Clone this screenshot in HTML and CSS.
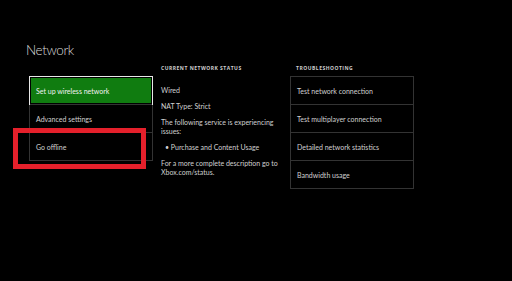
FILE: index.html
```html
<!DOCTYPE html>
<html lang="en">
<head>
    <meta charset="UTF-8">
    <title>Network</title>
    <link rel="stylesheet" href="styles.css">
</head>
<body>
    <div class="screen">
        <h1 class="title">Network</h1>

        <div class="columns">
            <div class="menu-col">
                <div class="menu">
                    <div class="menu-item selected">Set up wireless network</div>
                    <div class="menu-item">Advanced settings</div>
                    <div class="menu-item">Go offline</div>
                </div>
                <div class="highlight"></div>
            </div>

            <div class="status-col">
                <div class="col-header">Current network status</div>
                <p class="status-line wired">Wired</p>
                <p class="status-line">NAT Type: Strict</p>
                <p class="status-line">The following service is experiencing issues:</p>
                <p class="status-line bullet">&bull; Purchase and Content Usage</p>
                <p class="status-line">For a more complete description go to Xbox.com/status.</p>
            </div>

            <div class="trouble-col">
                <div class="col-header">Troubleshooting</div>
                <div class="menu">
                    <div class="menu-item">Test network connection</div>
                    <div class="menu-item">Test multiplayer connection</div>
                    <div class="menu-item">Detailed network statistics</div>
                    <div class="menu-item">Bandwidth usage</div>
                </div>
            </div>
        </div>
    </div>
</body>
</html>
```

FILE: styles.css
```css
body {
    margin: 0;
    background: #000;
    font-family: Lato, "Open Sans", sans-serif;
    color: #d8d8d8;
    width: 512px;
    height: 281px;
    overflow: hidden;
}

.screen {
    padding: 40px 0 0 26px;
}

.title {
    margin: 0;
    font-size: 13.5px;
    line-height: 20px;
    font-weight: 300;
    letter-spacing: -0.4px;
    color: #dcdcdc;
}

.columns {
    display: flex;
    margin-top: 3px;
    margin-left: 1px;
}

.menu-col {
    position: relative;
    width: 124px;
    margin-left: 2px;
    padding-top: 13px;
}

.menu {
    border: 1px solid #333;
}

.menu-item {
    height: 27px;
    display: flex;
    align-items: center;
    padding-left: 6px;
    font-size: 7px;
    color: #d0d0d0;
    border-top: 1px solid #333;
}

.menu-item:first-child {
    border-top: none;
}

.menu-item.selected {
    background: #107c10;
    color: #f2f2f2;
    border: 1px solid #e8e8e8;
    margin: -1px;
    box-shadow: inset 0 0 0 1px #000;
}

.highlight {
    position: absolute;
    left: -16px;
    top: 65px;
    width: 123px;
    height: 31px;
    border: 5px solid #e5202b;
}

.status-col {
    width: 124px;
    margin-left: 8px;
}

.col-header {
    height: 13px;
    font-family: "Open Sans", sans-serif;
    font-size: 5px;
    font-weight: 700;
    letter-spacing: 0.5px;
    text-transform: uppercase;
    color: #cfcfcf;
    line-height: 10px;
}

.status-line {
    margin: 0 0 7px;
    font-size: 7px;
    line-height: 9px;
    color: #d0d0d0;
}

.status-line.wired {
    margin-top: 10px;
}

.status-line.bullet {
    padding-left: 4px;
}

.trouble-col {
    width: 124px;
    margin-left: 5px;
}

.trouble-col .col-header {
    padding-left: 6px;
}
```
